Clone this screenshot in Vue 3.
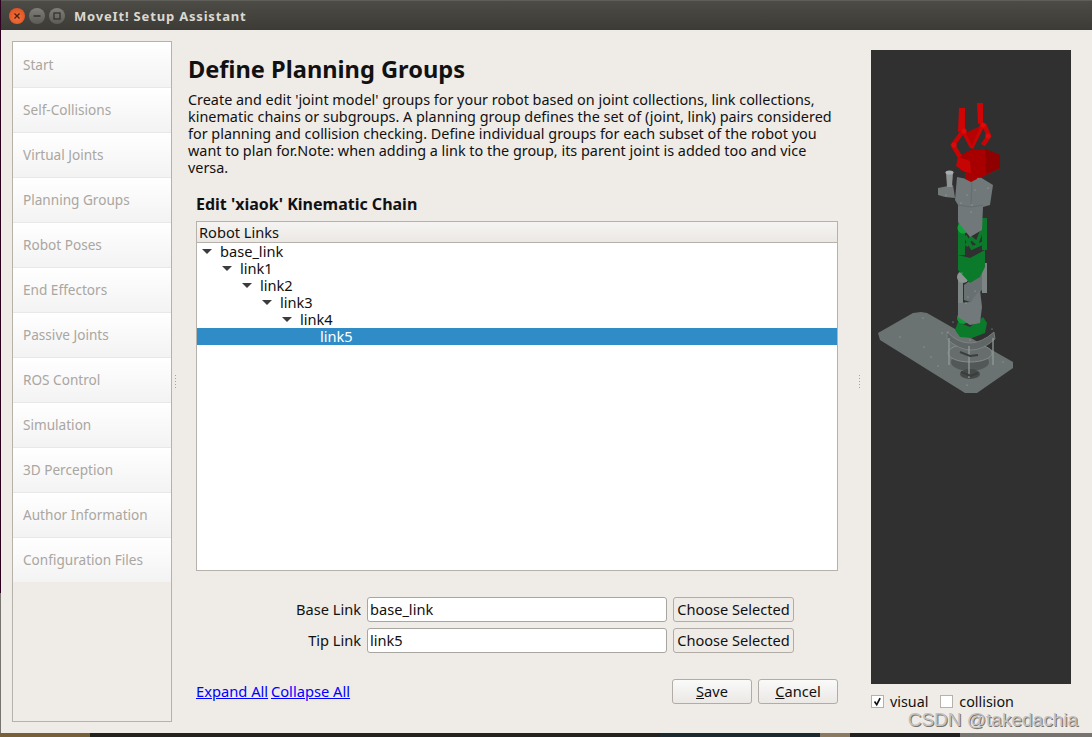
<script setup>
const steps = ['Start','Self-Collisions','Virtual Joints','Planning Groups','Robot Poses','End Effectors','Passive Joints','ROS Control','Simulation','3D Perception','Author Information','Configuration Files']
const links = ['base_link','link1','link2','link3','link4','link5']
const description = [
  "Create and edit 'joint model' groups for your robot based on joint collections, link collections,",
  'kinematic chains or subgroups. A planning group defines the set of (joint, link) pairs considered',
  'for planning and collision checking. Define individual groups for each subset of the robot you',
  'want to plan for.Note: when adding a link to the group, its parent joint is added too and vice',
  'versa.'
]
const fields = [{ label: 'Base Link', value: 'base_link' }, { label: 'Tip Link', value: 'link5' }]
const rivets = [[900,337],[923,318],[924,347],[931,357],[942,333],[938,366],[1003,362],[967,385],[953,322],[970,340],[992,329],[948,332],[967,195],[975,190],[988,188],[972,205],[971,212],[961,203],[968,297],[975,291],[966,303],[962,273],[946,195]]
</script>

<template>
  <div class="desktop">
    <div class="window">
      <header class="titlebar">
        <div class="controls">
          <span class="ctl close"><svg viewBox="0 0 16 16"><path d="M5.5 5.5l5 5M10.5 5.5l-5 5" stroke="#4a2010" stroke-width="1.3"/></svg></span>
          <span class="ctl"><svg viewBox="0 0 16 16"><path d="M4.5 8h7" stroke="#2f2e2a" stroke-width="1.4"/></svg></span>
          <span class="ctl"><svg viewBox="0 0 16 16"><rect x="5" y="5" width="6" height="6" fill="none" stroke="#2f2e2a" stroke-width="1.2"/></svg></span>
        </div>
        <span class="title">MoveIt! Setup Assistant</span>
      </header>
      <div class="main">
        <nav class="sidebar">
          <div v-for="s in steps" :key="s" class="step">{{ s }}</div>
        </nav>
        <div class="handle left"><i></i><i></i><i></i><i></i><i></i></div>
        <section class="content">
          <h1>Define Planning Groups</h1>
          <p class="desc"><span v-for="l in description" :key="l">{{ l }}</span></p>
          <div class="panel">
            <h2>Edit 'xiaok' Kinematic Chain</h2>
            <div class="tree">
              <div class="tree-head">Robot Links</div>
              <div v-for="(l, i) in links" :key="l" class="row" :class="{ selected: i === 5 }" :style="{ paddingLeft: 4 + i * 20 + 'px' }">
                <span class="arrow" :class="{ none: i === 5 }"></span>{{ l }}
              </div>
            </div>
            <div class="form">
              <div v-for="f in fields" :key="f.label" class="form-row">
                <label>{{ f.label }}</label>
                <div class="input">{{ f.value }}</div>
                <button class="btn choose">Choose Selected</button>
              </div>
            </div>
            <div class="actions">
              <div class="links"><a>Expand All</a> <a>Collapse All</a></div>
              <div class="buttons">
                <button class="btn action"><u>S</u>ave</button>
                <button class="btn action"><u>C</u>ancel</button>
              </div>
            </div>
          </div>
        </section>
        <div class="handle right"><i></i><i></i><i></i><i></i><i></i></div>
        <aside class="viewer">
          <div class="viewport">
            <svg viewBox="871 50 200 634" width="200" height="634">
              <!-- base plate -->
              <path d="M878 333l35-20 8-1 6 1 86 49v6l-36 25h-12l-85-53z" fill="#6b7372"/>
              <!-- lower platform and pillars -->
              <ellipse cx="970" cy="362" rx="19" ry="9" fill="#525857"/>
              <ellipse cx="970" cy="374" rx="10" ry="5" fill="#454a49"/>
              <ellipse cx="970" cy="353" rx="22" ry="9" fill="#666d6c" stroke="#858d8c"/>
              <path d="M947 332q22 22 47 0l1 7q-24 22-48 0z" fill="#5f6665" stroke="#858d8c" stroke-width=".7"/>
              <path d="M949 338v27M969 346v32M993 338v27" stroke="#929a98" stroke-width="1.3" fill="none"/>
              <path d="M960 352l10 4 8-1M961 372l10 4 7-3" stroke="#3a3e3d" stroke-width="2" fill="none"/>
              <!-- lower green joint -->
              <path d="M955 330l3-8 12 5 13-10 4 6-2 10-13 5-12-1z" fill="#0c7a2b"/>
              <circle cx="963" cy="318" r="6" fill="#119a38"/>
              <!-- lower arm -->
              <path d="M964 285l18-13v18l-12 12-6-2z" fill="#697071"/>
              <path d="M958 303l12-1 10-12 2 17-2 16-10 2-12-8z" fill="#71797a"/>
              <path d="M958 275h5v28h-5zM982 263h5v30h-5z" fill="#7d8584"/>
              <circle cx="963" cy="277" r="6" fill="#8d9594"/>
              <!-- middle green -->
              <path d="M958 255l12 3 15-8v17l-5 10-10 6-12-13z" fill="#0c7a2b"/>
              <path d="M958 223h7v32h-7zM982 218h5v32h-5z" fill="#0c7a2b"/>
              <path d="M966 246l5-8 6 5 6-16M965 236l7 12 11-5" stroke="#0c7a2b" stroke-width="3.5" fill="none"/>
              <circle cx="963" cy="228" r="5.500" fill="#14a33b"/>
              <!-- upper arm grey -->
              <path d="M957 177l15 3 8-3 13 8-3 20-7 2-1 23-12 7-12-15v-17l-3-5z" fill="#71787a"/>
              <path d="M972 180l-1 24M958 205l13 2 12-2" stroke="#666d6f" stroke-width="1" fill="none"/>
              <path d="M938 188l15-3 2 13-10-1-7-2z" fill="#727978"/>
              <path d="M946 172h7l-1 15h-5z" fill="#8f9594"/>
              <ellipse cx="949.500" cy="172.500" rx="4" ry="2" fill="#a8aead"/>
              <!-- gripper -->
              <path d="M965 173l12-2v8l-6 3-6-3z" fill="#a80303"/>
              <path d="M958 157l12-7 15-1 15 6v13l-20 10-20-8z" fill="#a80000"/>
              <path d="M985 149l15 6v13l-14 6z" fill="#8f0000"/>
              <path d="M958 157l-2 9 9 6 6 1-1-12z" fill="#c70404"/>
              <path d="M959 108h6v22l-7 2zM977 103h6v20l-5 1z" fill="#cf0505"/>
              <path d="M963 131l-10 14 7 12M964 132l8 15M983 124l-12 24M984 124l5 12-6 9" stroke="#c90404" stroke-width="4.500" fill="none"/>
              <path d="M966 133l6 13 8-20" fill="#b50303"/>
              <circle cx="964" cy="131" r="2.600" fill="#dd0a0a"/>
              <circle cx="983" cy="125" r="2.600" fill="#dd0a0a"/>
              <circle cx="954" cy="145" r="2.600" fill="#dd0a0a"/>
              <circle cx="988" cy="136" r="2.600" fill="#dd0a0a"/>
              <circle v-for="(p, i) in rivets" :key="i" :cx="p[0]" :cy="p[1]" r=".6" fill="#a9b0ae"/>
            </svg>
          </div>
          <div class="checks">
            <label class="check"><span class="box"><svg viewBox="0 0 13 13"><path d="M3 6.500l2.600 3.800 4-7.800" fill="none" stroke="#111" stroke-width="2"/></svg></span>visual</label>
            <label class="check"><span class="box"></span>collision</label>
          </div>
        </aside>
      </div>
      <span class="watermark">CSDN @takedachia</span>
    </div>
    <div class="wallpaper"></div>
  </div>
</template>

<style>
html, body { margin: 0; background: #2c001e; }
</style>

<style scoped>
.desktop { width: 1092px; height: 737px; overflow: hidden; display: flex; flex-direction: column; background: linear-gradient(#2c001e 0 593px, #77746f 593px); font-family: "Noto Sans", "Open Sans", sans-serif; font-size: 14.6px; color: #111; }
.window { position: relative; flex: none; height: 733px; margin-left: 1px; background: #efebe7; display: flex; flex-direction: column; }
.wallpaper { flex: 1; background: linear-gradient(90deg, #75603a 0 90px, #24221f 90px 660px, #1b2a30 660px 820px, #8a7a60 820px 850px, #222 850px 960px, #77746f 960px); }
.titlebar { flex: none; height: 30px; display: flex; align-items: center; background: linear-gradient(#4c4b45, #3c3b37); border-top: 1px solid #5f5e58; box-sizing: border-box; }
.controls { display: flex; gap: 4px; margin-left: 8px; }
.ctl { width: 16px; height: 16px; border-radius: 50%; background: linear-gradient(#807e78, #5c5b56); display: block; }
.ctl svg { display: block; width: 16px; height: 16px; }
.ctl.close { background: radial-gradient(circle at 50% 60%, #f3733c, #d8481a); }
.title { margin-left: 9px; color: #dcd8d0; font-weight: 700; font-size: 13px; letter-spacing: .82px; }
.main { flex: 1; display: flex; padding: 11px 20px 11px 11px; min-height: 0; }
.sidebar { flex: none; width: 158px; border: 1px solid #b6b1ab; background: #efebe7; }
.step { height: 45px; box-sizing: border-box; padding: 13px 0 0 10px; line-height: 18px; font-size: 13.6px; color: #aaa6a1; background: linear-gradient(#fff, #f3f3f3); border-top: 1px solid #e8e8e8; }
.step:first-child { border-top-color: #fff; }
.handle { flex: none; display: flex; flex-direction: column; justify-content: center; align-items: center; gap: 2px; }
.handle i { width: 1px; height: 1px; background: #a8a39d; }
.handle.left { width: 6px; margin-right: 10px; }
.handle.right { width: 6px; margin: 0 9px 0 18px; }
.content { flex: none; width: 650px; min-width: 0; }
h1 { margin: 10px 0 0; font-size: 23.6px; line-height: 36px; font-weight: 700; color: #111; }
.desc { margin: 4px 0 0; font-size: 14.4px; line-height: 17px; white-space: nowrap; }
.desc span { display: block; }
.panel { padding: 0 0 0 8px; }
h2 { margin: 17px 0 0; font-size: 16px; line-height: 22px; font-weight: 700; }
.tree { margin-top: 6px; height: 350px; box-sizing: border-box; border: 1px solid #b6b1ab; background: #fff; }
.tree-head { height: 21px; box-sizing: border-box; padding-left: 2px; line-height: 20px; background: linear-gradient(#f6f4f2, #ebe8e4); border-bottom: 1px solid #b6b1ab; }
.row { height: 17px; line-height: 17px; display: flex; align-items: center; box-sizing: border-box; }
.arrow { width: 0; height: 0; margin: 0 8px 0 1px; border: 5px solid transparent; border-top: 5px solid #3c3c3c; border-bottom: 0; }
.arrow.none { border-color: transparent; }
.row.selected { background: #308cc6; color: #fff; }
.form { margin-top: 26px; display: flex; flex-direction: column; gap: 6px; }
.form-row { display: flex; align-items: center; height: 25px; }
.form-row label { width: 165px; text-align: right; margin-right: 6px; padding-bottom: 1px; }
.input { width: 300px; height: 25px; box-sizing: border-box; border: 1px solid #a9a5a0; border-radius: 3px; background: #fff; padding-left: 2px; line-height: 22px; }
.btn { font: inherit; color: #111; padding: 0 0 1px; height: 25px; box-sizing: border-box; border: 1px solid #b1aca6; border-radius: 3px; background: linear-gradient(#fafafa, #ebe8e5); }
.choose { width: 121px; margin-left: 6px; background: #efebe7; }
.actions { margin-top: 26px; display: flex; justify-content: space-between; align-items: center; height: 25px; }
.links { word-spacing: -1px; padding-bottom: 2px; font-size: 14.7px; }
.links a { color: #0000ff; text-decoration: underline; word-spacing: 0; }
.buttons { display: flex; gap: 6px; }
.action { width: 80px; }
.viewer { flex: none; width: 200px; margin-top: 9px; }
.viewport { height: 634px; background: #303030; }
.viewport svg { display: block; }
.checks { display: flex; gap: 12px; margin-top: 9px; height: 17px; align-items: center; font-size: 14.3px; }
.check { display: flex; align-items: center; }
.box { width: 13px; height: 13px; box-sizing: border-box; border: 1px solid #b6b1ab; background: #fff; margin-right: 6px; display: block; }
.box svg { display: block; width: 11px; height: 11px; }
.watermark { position: absolute; right: 14px; top: 711px; font-family: "Liberation Sans", sans-serif; font-size: 19px; line-height: 18px; color: #c4c1bd; text-shadow: 1px 1px 0 #77746f; }
</style>
